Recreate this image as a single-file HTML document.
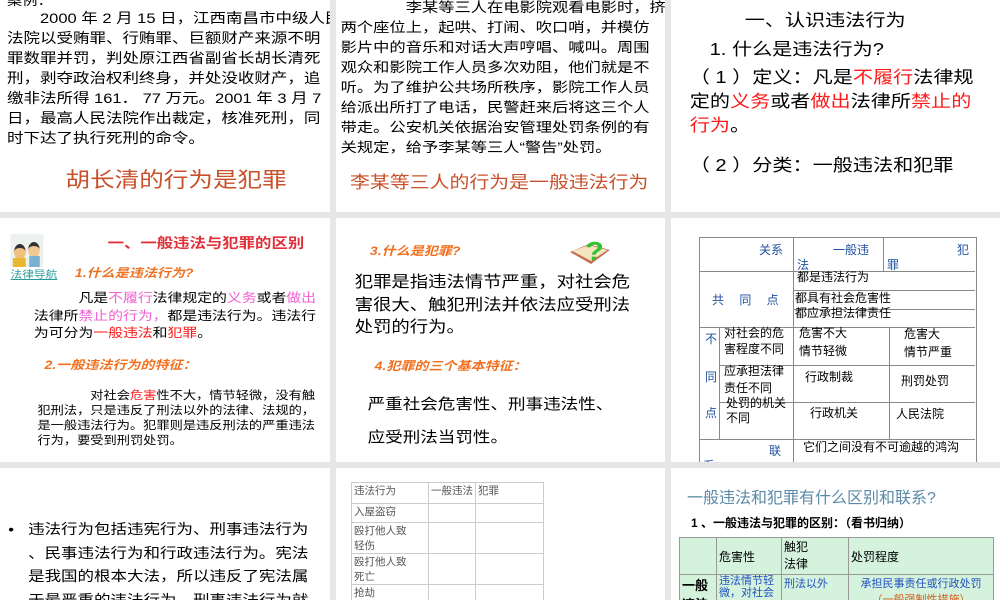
<!DOCTYPE html>
<html><head><meta charset="utf-8"><style>
body{margin:0;width:1000px;height:600px;background:#e6e6e6;position:relative;overflow:hidden;font-family:"Liberation Sans","Noto Sans CJK SC",sans-serif;}
.s{position:absolute;background:#fff;overflow:hidden}
.in{position:absolute;left:0;top:0;width:290px;height:100%;transform:scaleX(1.17);transform-origin:0 0}
.a{position:absolute;white-space:nowrap}
.h{font-family:"Liberation Sans","Noto Sans CJK SC",sans-serif}
.r{color:#ff1a1a}
table{border-collapse:collapse;position:absolute}
td{padding:0 2px;vertical-align:top}
</style></head><body>

<div class="s" style="left:0;top:0;width:330px;height:212px"><div class="in">
<div class="a" style="left:6px;top:-10px;font-size:13px">案例：</div>
<div class="a" style="left:6px;top:8px;font-size:14.1px;line-height:20px">　　2000 年 2 月 15 日，江西南昌市中级人民<br>法院以受贿罪、行贿罪、巨额财产来源不明<br>罪数罪并罚，判处原江西省副省长胡长清死<br>刑，剥夺政治权利终身，并处没收财产，追<br>缴非法所得 161． 77 万元。2001 年 3 月 7<br>日，最高人民法院作出裁定，核准死刑，同<br>时下达了执行死刑的命令。</div>
<div class="a" style="left:56px;top:164px;font-size:21px;color:#c8502a">胡长清的行为是犯罪</div>
</div></div>

<div class="s" style="left:336px;top:0;width:329px;height:212px"><div class="in">
<div class="a" style="left:4px;top:-3px;font-size:13.9px;line-height:20px">　　　　李某等三人在电影院观看电影时，挤在<br>两个座位上，起哄、打闹、吹口哨，并模仿<br>影片中的音乐和对话大声哼唱、喊叫。周围<br>观众和影院工作人员多次劝阻，他们就是不<br>听。为了维护公共场所秩序，影院工作人员<br>给派出所打了电话，民警赶来后将这三个人<br>带走。公安机关依据治安管理处罚条例的有<br>关规定，给予李某等三人“警告”处罚。</div>
<div class="a" style="left:12px;top:168px;font-size:17px;color:#c8502a">李某等三人的行为是一般违法行为</div>
</div></div>

<div class="s" style="left:671px;top:0;width:329px;height:212px"><div class="in" style="font-size:17.2px">
<div class="a" style="left:63px;top:6px">一、认识违法行为</div>
<div class="a" style="left:33px;top:35px">1. 什么是违法行为?</div>
<div class="a" style="left:16px;top:65px;line-height:24px">（ 1 ）定义：凡是<span class="r">不履行</span>法律规<br>定的<span class="r">义务</span>或者<span class="r">做出</span>法律所<span class="r">禁止的</span><br><span class="r">行为</span>。</div>
<div class="a" style="left:16px;top:151px">（ 2 ）分类：一般违法和犯罪</div>
</div></div>

<div class="s" style="left:0;top:218px;width:330px;height:244px"><div class="in">
<div class="a" style="left:9px;top:16px;width:28px;height:33px;background:#eef2ee"><div style="position:absolute;left:3px;top:10px;width:10px;height:12px;border-radius:50%;background:#f0c080;border-top:4px solid #333"></div><div style="position:absolute;left:15px;top:8px;width:10px;height:12px;border-radius:50%;background:#f0c890;border-top:4px solid #333"></div><div style="position:absolute;left:2px;top:24px;width:11px;height:9px;background:#e8b830"></div><div style="position:absolute;left:16px;top:22px;width:9px;height:11px;background:#7ab0d0"></div></div>
<div class="a" style="left:9px;top:48px;font-size:10px;color:#2a9a9a;text-decoration:underline">法律导航</div>
<div class="a" style="left:92px;top:15px;font-size:14px;font-weight:bold;color:#e0303a">一、一般违法与犯罪的区别</div>
<div class="a" style="left:64px;top:46px;font-size:12px;font-weight:bold;color:#f07020;font-style:italic">1.什么是违法行为?</div>
<div class="a" style="left:29px;top:72px;font-size:12.7px;line-height:17.5px">　　　凡是<span style="color:#f060d0">不履行</span>法律规定的<span style="color:#f060d0">义务</span>或者<span style="color:#f060d0">做出</span><br>法律所<span style="color:#f060d0">禁止的行为，</span>都是违法行为。违法行<br>为可分为<span class="r">一般违法</span>和<span class="r">犯罪</span>。</div>
<div class="a" style="left:38px;top:138px;font-size:12px;font-weight:bold;color:#f07020;font-style:italic">2.一般违法行为的特征：</div>
<div class="a" style="left:32px;top:171px;font-size:11.3px;line-height:15px">　　　　对社会<span class="r">危害</span>性不大，情节轻微，没有触<br>犯刑法，只是违反了刑法以外的法律、法规的，<br>是一般违法行为。犯罪则是违反刑法的严重违法<br>行为，要受到刑罚处罚。</div>
</div></div>

<div class="s" style="left:336px;top:218px;width:329px;height:244px"><div class="in">
<div class="a" style="left:29px;top:24px;font-size:12px;font-weight:bold;color:#f07020;font-style:italic">3.什么是犯罪?</div>
<svg class="a" style="left:198px;top:16px" width="38" height="34"><path d="M2 18 L18 10 L36 16 L20 30 Z" fill="#c07050"/><path d="M4 17 L18 11 L34 16 L20 27 Z" fill="#f4e4c0"/><text x="15" y="26" font-size="26" font-weight="bold" fill="#30c030" font-family="Liberation Sans">?</text></svg>
<div class="a" style="left:16px;top:54px;font-size:15.7px;line-height:22.5px">犯罪是指违法情节严重，对社会危<br>害很大、触犯刑法并依法应受刑法<br>处罚的行为。</div>
<div class="a" style="left:33px;top:139px;font-size:12px;font-weight:bold;color:#f07020;font-style:italic">4.犯罪的三个基本特征：</div>
<div class="a" style="left:27px;top:175px;font-size:15px">严重社会危害性、刑事违法性、</div>
<div class="a" style="left:27px;top:208px;font-size:15px">应受刑法当罚性。</div>
</div></div>

<div class="s" style="left:671px;top:218px;width:329px;height:244px;font-size:12px">
<div style="position:absolute;left:28px;top:19px;width:276px;height:230px;border:1px solid #888"></div>
<div style="position:absolute;left:28px;top:53px;width:276px;border-top:1px solid #888"></div>
<div style="position:absolute;left:122px;top:72px;width:182px;border-top:1px solid #888"></div>
<div style="position:absolute;left:122px;top:91px;width:182px;border-top:1px solid #888"></div>
<div style="position:absolute;left:28px;top:109px;width:276px;border-top:1px solid #888"></div>
<div style="position:absolute;left:48px;top:147px;width:256px;border-top:1px solid #888"></div>
<div style="position:absolute;left:48px;top:184px;width:256px;border-top:1px solid #888"></div>
<div style="position:absolute;left:28px;top:221px;width:276px;border-top:1px solid #888"></div>
<div style="position:absolute;left:122px;top:19px;height:230px;border-left:1px solid #888"></div>
<div style="position:absolute;left:212px;top:19px;height:34px;border-left:1px solid #888"></div>
<div style="position:absolute;left:48px;top:109px;height:112px;border-left:1px solid #888"></div>
<div style="position:absolute;left:218px;top:109px;height:112px;border-left:1px solid #888"></div>
<div class="a" style="left:88px;top:23px;color:#2050a0">关系</div>
<div class="a" style="left:162px;top:23px;color:#2050a0">一般违</div>
<div class="a" style="left:126px;top:38px;color:#2050a0">法</div>
<div class="a" style="left:286px;top:23px;color:#2050a0">犯</div>
<div class="a" style="left:216px;top:38px;color:#2050a0">罪</div>
<div class="a" style="left:126px;top:50px">都是违法行为</div>
<div class="a" style="left:124px;top:71px">都具有社会危害性</div>
<div class="a" style="left:124px;top:86px">都应承担法律责任</div>
<div class="a" style="left:41px;top:73px;color:#2050a0;letter-spacing:6px">共 同 点</div>
<div class="a" style="left:34px;top:112px;color:#2050a0">不</div>
<div class="a" style="left:34px;top:150px;color:#2050a0">同</div>
<div class="a" style="left:34px;top:186px;color:#2050a0">点</div>
<div class="a" style="left:53px;top:107px;line-height:16px">对社会的危<br>害程度不同</div>
<div class="a" style="left:53px;top:145px;line-height:17px">应承担法律<br>责任不同</div>
<div class="a" style="left:55px;top:178px;line-height:15px">处罚的机关<br>不同</div>
<div class="a" style="left:128px;top:106px;line-height:18px">危害不大<br>情节轻微</div>
<div class="a" style="left:233px;top:107px;line-height:18px">危害大<br>情节严重</div>
<div class="a" style="left:134px;top:150px">行政制裁</div>
<div class="a" style="left:230px;top:154px">刑罚处罚</div>
<div class="a" style="left:139px;top:186px">行政机关</div>
<div class="a" style="left:225px;top:187px">人民法院</div>
<div class="a" style="left:98px;top:224px;color:#2050a0">联</div>
<div class="a" style="left:32px;top:239px;color:#2050a0">系</div>
<div class="a" style="left:132px;top:220px">它们之间没有不可逾越的鸿沟</div>
</div>

<div class="s" style="left:0;top:468px;width:330px;height:132px"><div class="in">
<div class="a" style="left:7px;top:50px;font-size:14.1px;line-height:23.5px">•</div>
<div class="a" style="left:24px;top:50px;font-size:14.1px;line-height:23.5px">违法行为包括违宪行为、刑事违法行为<br>、民事违法行为和行政违法行为。宪法<br>是我国的根本大法，所以违反了宪法属<br>于最严重的违法行为。刑事违法行为就</div>
</div></div>

<div class="s" style="left:336px;top:468px;width:329px;height:132px;font-size:10.5px;color:#555">
<table style="left:15px;top:14px;border:1px solid #aaa;white-space:nowrap">
<tr style="height:21px"><td style="border:1px solid #ccc;width:72px">违法行为</td><td style="border:1px solid #ccc;width:42px">一般违法</td><td style="border:1px solid #ccc;width:63px">犯罪</td></tr>
<tr style="height:19px"><td style="border:1px solid #ccc">入屋盗窃</td><td style="border:1px solid #ccc"></td><td style="border:1px solid #ccc"></td></tr>
<tr style="height:30px"><td style="border:1px solid #ccc">殴打他人致<br>轻伤</td><td style="border:1px solid #ccc"></td><td style="border:1px solid #ccc"></td></tr>
<tr style="height:30px"><td style="border:1px solid #ccc">殴打他人致<br>死亡</td><td style="border:1px solid #ccc"></td><td style="border:1px solid #ccc"></td></tr>
<tr style="height:20px"><td style="border:1px solid #ccc">抢劫</td><td style="border:1px solid #ccc"></td><td style="border:1px solid #ccc"></td></tr>
</table>
</div>

<div class="s" style="left:671px;top:468px;width:329px;height:132px">
<div class="a" style="left:16px;top:16px;font-size:16px;color:#5a8aa8">一般违法和犯罪有什么区别和联系?</div>
<div class="a" style="left:20px;top:46px;font-size:12px;font-weight:bold">1 、一般违法与犯罪的区别：（看书归纳）</div>
<table style="left:8px;top:69px;background:#d4f2dc;font-size:12px">
<tr style="height:37px"><td style="border:1px solid #999;width:32px"></td><td style="border:1px solid #999;width:60px;vertical-align:middle">危害性</td><td style="border:1px solid #999;width:62px">触犯<br>法律</td><td style="border:1px solid #999;width:140px;vertical-align:middle">处罚程度</td></tr>
<tr style="height:30px"><td style="border:1px solid #999;font-weight:bold;font-size:13px">一般<br>违法</td><td style="border:1px solid #999;color:#2050c0;font-size:11px;line-height:12px">违法情节轻<br>微，对社会</td><td style="border:1px solid #999;color:#2050c0;font-size:11px">刑法以外</td><td style="border:1px solid #999;color:#2050c0;font-size:11px;text-align:center">承担民事责任或行政处罚<br><span style="color:#d06020">（一般强制性措施）</span></td></tr>
</table>
</div>
</body></html>
